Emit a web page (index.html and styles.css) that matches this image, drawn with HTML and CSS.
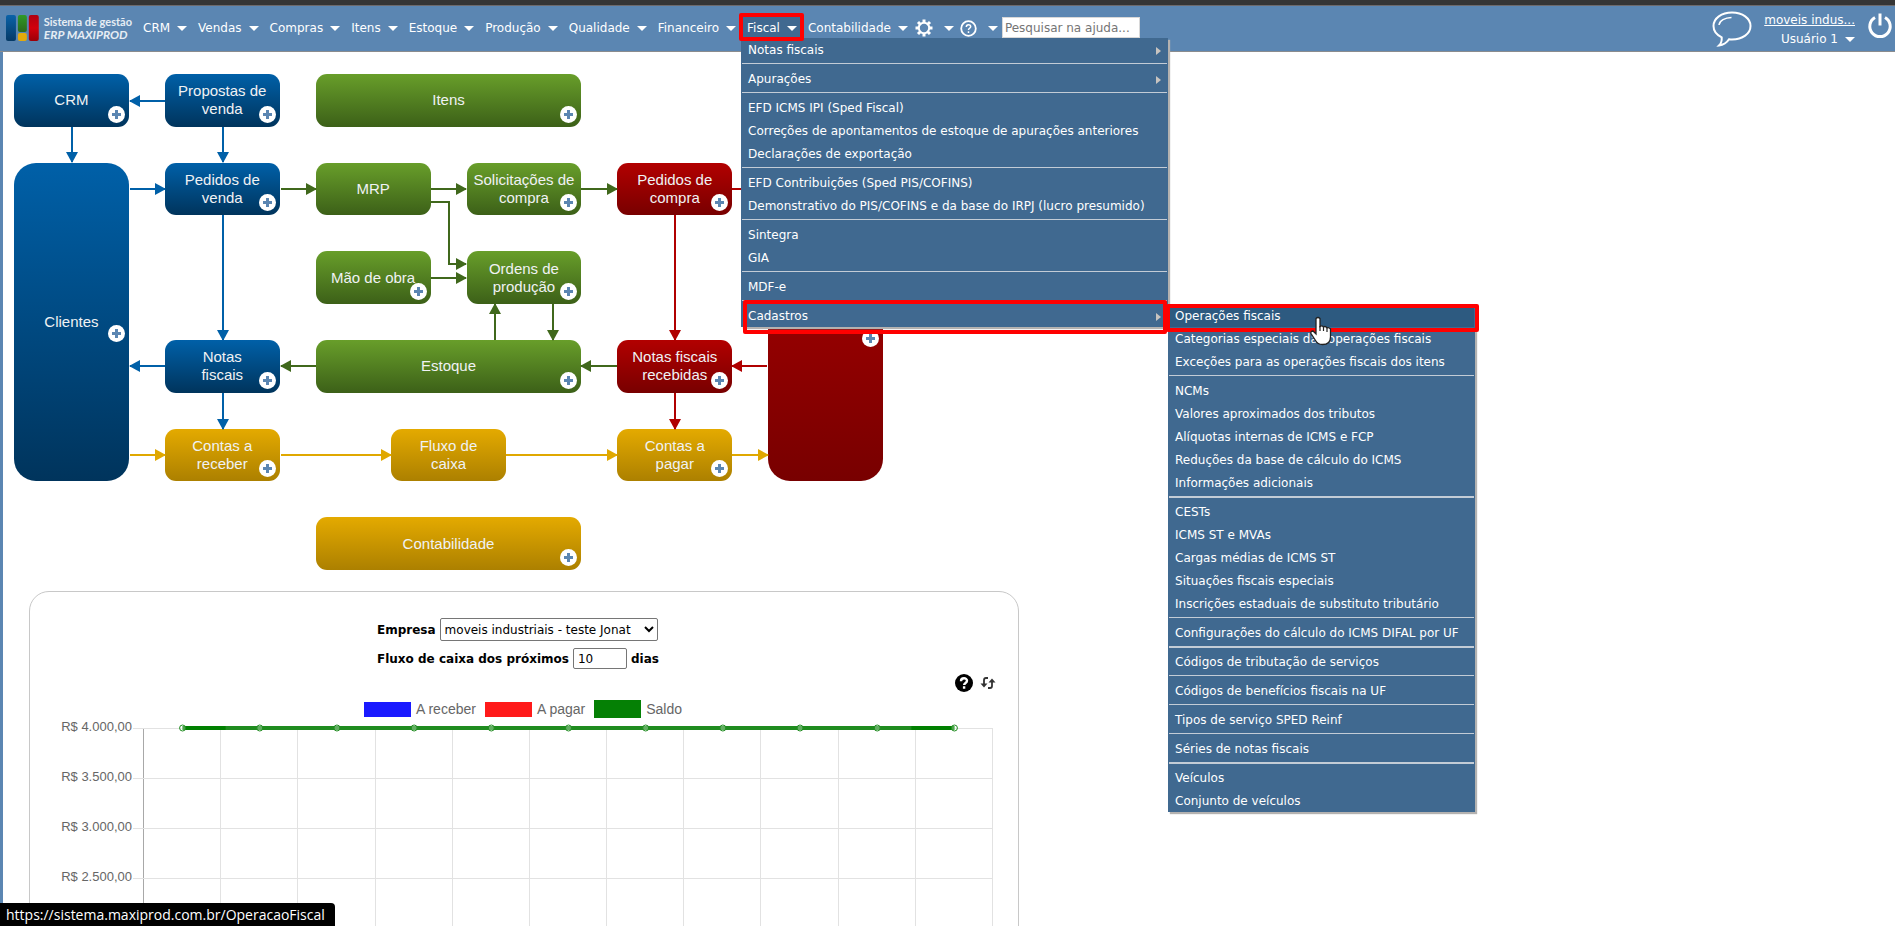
FILE: index.html
```html
<!DOCTYPE html>
<html lang="pt-BR">
<head>
    <meta charset="UTF-8">
    <meta name="viewport" content="width=device-width, initial-scale=1.0">
    <title>ERP MAXIPROD</title>
    <link rel="stylesheet" href="styles.css">
</head>
<body>
    <div class="top-strip"></div>
    <header class="header">
        <a class="logo" href="#">
            <svg width="34" height="26" viewBox="0 0 34 26">
                <defs>
                    <linearGradient id="logoBlue" x1="0" y1="0" x2="0" y2="1"><stop offset="0" stop-color="#0a62a8"/><stop offset="1" stop-color="#063a66"/></linearGradient>
                    <linearGradient id="logoGreen" x1="0" y1="0" x2="0" y2="1"><stop offset="0" stop-color="#2f9a26"/><stop offset="1" stop-color="#2c6a1c"/></linearGradient>
                    <linearGradient id="logoRed" x1="0" y1="0" x2="0" y2="1"><stop offset="0" stop-color="#b00010"/><stop offset="0.5" stop-color="#d2000c"/><stop offset="1" stop-color="#9c0008"/></linearGradient>
                </defs>
                <rect x="0" y="0" width="10" height="26" rx="2" fill="url(#logoBlue)"/>
                <rect x="12" y="0" width="9" height="17" rx="2" fill="url(#logoGreen)"/>
                <rect x="12" y="18" width="9" height="8" rx="2" fill="#e3aa0c"/>
                <rect x="23" y="0" width="10" height="26" rx="2" fill="url(#logoRed)"/>
            </svg>
            <span class="logo-text">Sistema de gestão<br><em>ERP MAXIPROD</em></span>
        </a>

        <nav>
            <ul class="nav">
                <li><a class="tab" href="#">CRM</a></li>
                <li><a class="tab" href="#">Vendas</a></li>
                <li><a class="tab" href="#">Compras</a></li>
                <li><a class="tab" href="#">Itens</a></li>
                <li><a class="tab" href="#">Estoque</a></li>
                <li><a class="tab" href="#">Produção</a></li>
                <li><a class="tab" href="#">Qualidade</a></li>
                <li><a class="tab" href="#">Financeiro</a></li>
                <li class="open">
                    <a class="tab marked" href="#">Fiscal</a>
                    <ul class="menu">
                        <li><a class="has-sub" href="#">Notas fiscais</a></li>
                        <li class="sep"><a class="has-sub" href="#">Apurações</a></li>
                        <li class="sep"><a href="#">EFD ICMS IPI (Sped Fiscal)</a></li>
                        <li><a href="#">Correções de apontamentos de estoque de apurações anteriores</a></li>
                        <li><a href="#">Declarações de exportação</a></li>
                        <li class="sep"><a href="#">EFD Contribuições (Sped PIS/COFINS)</a></li>
                        <li><a href="#">Demonstrativo do PIS/COFINS e da base do IRPJ (lucro presumido)</a></li>
                        <li class="sep"><a href="#">Sintegra</a></li>
                        <li><a href="#">GIA</a></li>
                        <li class="sep"><a href="#">MDF-e</a></li>
                        <li class="sep">
                            <a class="has-sub marked" href="#">Cadastros</a>
                            <ul class="menu submenu">
                                <li><a class="active marked" href="#">Operações fiscais</a></li>
                                <li><a href="#">Categorias especiais das operações fiscais</a></li>
                                <li><a href="#">Exceções para as operações fiscais dos itens</a></li>
                                <li class="sep"><a href="#">NCMs</a></li>
                                <li><a href="#">Valores aproximados dos tributos</a></li>
                                <li><a href="#">Alíquotas internas de ICMS e FCP</a></li>
                                <li><a href="#">Reduções da base de cálculo do ICMS</a></li>
                                <li><a href="#">Informações adicionais</a></li>
                                <li class="sep thick"><a href="#">CESTs</a></li>
                                <li><a href="#">ICMS ST e MVAs</a></li>
                                <li><a href="#">Cargas médias de ICMS ST</a></li>
                                <li><a href="#">Situações fiscais especiais</a></li>
                                <li><a href="#">Inscrições estaduais de substituto tributário</a></li>
                                <li class="sep"><a href="#">Configurações do cálculo do ICMS DIFAL por UF</a></li>
                                <li class="sep thick"><a href="#">Códigos de tributação de serviços</a></li>
                                <li class="sep"><a href="#">Códigos de benefícios fiscais na UF</a></li>
                                <li class="sep"><a href="#">Tipos de serviço SPED Reinf</a></li>
                                <li class="sep"><a href="#">Séries de notas fiscais</a></li>
                                <li class="sep thick"><a href="#">Veículos</a></li>
                                <li><a href="#">Conjunto de veículos</a></li>
                            </ul>
                        </li>
                    </ul>
                </li>
                <li><a class="tab" href="#">Contabilidade</a></li>
                <li>
                    <a class="tab icon-tab" href="#" aria-label="Configurações">
                        <svg width="18" height="18" viewBox="0 0 18 18" fill="none" stroke="#fff">
                            <circle cx="9" cy="9" r="5.2" stroke-width="2"/>
                            <path stroke-width="3" d="M9 0.5v3M9 14.500v3M0.500 9h3M14.500 9h3M3 3l2 2M13 13l2 2M15 3l-2 2M5 13l-2 2"/>
                        </svg>
                    </a>
                </li>
                <li>
                    <a class="tab icon-tab" href="#" aria-label="Ajuda">
                        <svg width="17" height="17" viewBox="0 0 17 17" fill="none" stroke="#fff">
                            <circle cx="8.500" cy="8.500" r="7.300" stroke-width="1.800"/>
                            <path stroke-width="1.500" d="M6.300 6.900c0-3 4.400-2.900 4.400-.3 0 1.700-2.200 1.600-2.200 3.400M8.500 11.300v1.700"/>
                        </svg>
                    </a>
                </li>
            </ul>
        </nav>
        <input class="search" type="text" placeholder="Pesquisar na ajuda..." aria-label="Pesquisar na ajuda">

        <div class="user-area">
            <a href="#" aria-label="Chat">
                <svg width="40" height="36" viewBox="0 0 40 36" fill="none" stroke="#fff" stroke-width="2">
                    <path d="M20 1.500c10.500 0 18.500 5.800 18.500 13.500S30.500 28.500 20 28.500c-1 0-2-.1-3-.2-2 3.200-5.500 5.700-10 6.200 2-2 3-4.600 2.700-8.200C4.700 23.900 1.500 19.900 1.500 15 1.500 7.300 9.500 1.500 20 1.500z"/>
                    <path stroke-width="1.500" d="M7 14c.5-4.500 6-7.300 12.500-7.500"/>
                </svg>
            </a>
            <div class="user">
                <a class="company" href="#">moveis indus...</a>
                <a class="username" href="#">Usuário 1</a>
            </div>
            <a href="#" aria-label="Sair">
                <svg width="26" height="26" viewBox="0 0 26 26" fill="none" stroke="#fff" stroke-width="3">
                    <path d="M8 4.500a10.200 10.200 0 1 0 10 0"/>
                    <path d="M13 0.500v12"/>
                </svg>
            </a>
        </div>
    </header>

    <main class="content">
        <div class="flow">
            <svg class="arrows" width="869" height="496" viewBox="14 74 869 496" fill="none" stroke-width="2">
                <defs>
                    <marker id="headBlue" markerUnits="userSpaceOnUse" markerWidth="11" markerHeight="12" refX="10" refY="6" orient="auto"><path fill="#0060a8" d="M0 0l11 6-11 6z"/></marker>
                    <marker id="headGreen" markerUnits="userSpaceOnUse" markerWidth="11" markerHeight="12" refX="10" refY="6" orient="auto"><path fill="#40681c" d="M0 0l11 6-11 6z"/></marker>
                    <marker id="headRed" markerUnits="userSpaceOnUse" markerWidth="11" markerHeight="12" refX="10" refY="6" orient="auto"><path fill="#b00000" d="M0 0l11 6-11 6z"/></marker>
                    <marker id="headYellow" markerUnits="userSpaceOnUse" markerWidth="11" markerHeight="12" refX="10" refY="6" orient="auto"><path fill="#e0a800" d="M0 0l11 6-11 6z"/></marker>
                </defs>
                <g class="blue-arrows">
                    <path d="M165 101H130"/>
                    <path d="M72 127V162"/>
                    <path d="M223 127V162"/>
                    <path d="M130 189H165"/>
                    <path d="M223 215V340"/>
                    <path d="M165 366H130"/>
                    <path d="M223 393V429"/>
                </g>
                <g class="green-arrows">
                    <path d="M281 189H316"/>
                    <path d="M431 189H466"/>
                    <path d="M431 202H449V264H466"/>
                    <path d="M431 278H466"/>
                    <path d="M581 189H617"/>
                    <path d="M495 340V304"/>
                    <path d="M553 304V340"/>
                    <path d="M316 366H281"/>
                    <path d="M617 366H581"/>
                </g>
                <g class="red-arrows">
                    <path d="M732 189H767"/>
                    <path d="M675 215V340"/>
                    <path d="M767 366H732"/>
                    <path d="M675 393V429"/>
                </g>
                <g class="yellow-arrows">
                    <path d="M130 455H165"/>
                    <path d="M281 455H391"/>
                    <path d="M506 455H617"/>
                    <path d="M732 455H768"/>
                </g>
            </svg>
            <a class="node blue col1 row1" href="#">CRM<i class="plus"></i></a>
            <a class="node blue col2 row1" href="#">Propostas de venda<i class="plus"></i></a>
            <a class="node green wide row1" href="#">Itens<i class="plus"></i></a>
            <a class="node blue tall col1" href="#">Clientes<i class="plus"></i></a>
            <a class="node blue col2 row2" href="#">Pedidos de venda<i class="plus"></i></a>
            <a class="node green col3 row2" href="#">MRP</a>
            <a class="node green col4 row2" href="#">Solicitações de compra<i class="plus"></i></a>
            <a class="node red col5 row2" href="#">Pedidos de compra<i class="plus"></i></a>
            <a class="node red tall col6" href="#" aria-label="Fornecedores"><i class="plus"></i></a>
            <a class="node green col3 row3" href="#">Mão de obra<i class="plus"></i></a>
            <a class="node green col4 row3" href="#">Ordens de produção<i class="plus"></i></a>
            <a class="node blue col2 row4" href="#">Notas<br>fiscais<i class="plus"></i></a>
            <a class="node green wide row4" href="#">Estoque<i class="plus"></i></a>
            <a class="node red col5 row4" href="#">Notas fiscais recebidas<i class="plus"></i></a>
            <a class="node yellow col2 row5" href="#">Contas a receber<i class="plus"></i></a>
            <a class="node yellow centered row5" href="#">Fluxo de<br>caixa</a>
            <a class="node yellow col5 row5" href="#">Contas a<br>pagar<i class="plus"></i></a>
            <a class="node yellow wide row6" href="#">Contabilidade<i class="plus"></i></a>
        </div>

        <section class="panel">
            <form class="filters">
                <div class="filter-row">
                    <label for="empresa">Empresa</label>
                    <select id="empresa">
                        <option>moveis industriais - teste Jonat</option>
                    </select>
                </div>
                <div class="filter-row">
                    <label for="dias">Fluxo de caixa dos próximos</label>
                    <input id="dias" type="text" value="10">
                    <span>dias</span>
                </div>
            </form>
            <div class="tools">
                <button type="button" aria-label="Ajuda">
                    <svg width="18" height="18" viewBox="0 0 18 18">
                        <circle cx="9" cy="9" r="9"/>
                        <path fill="none" stroke="#fff" stroke-width="2.400" d="M6 7.200c0-3.900 6-3.800 6-.4 0 2.200-2.900 2-2.900 4.300M9.100 12.300v2.400"/>
                    </svg>
                </button>
                <button type="button" aria-label="Atualizar">
                    <svg width="16" height="14" viewBox="0 0 16 14" fill="#333">
                        <path fill="none" stroke="#333" stroke-width="1.800" d="M8 2H6Q4 2 4 4v5M8 12h2q2 0 2-2V5"/>
                        <path d="M0.500 7.500h7L4 11.500zM8.500 6.500h7L12 2.500z"/>
                    </svg>
                </button>
            </div>
            <div class="legend">
                <span><i class="swatch receber"></i>A receber</span>
                <span><i class="swatch pagar"></i>A pagar</span>
                <span><i class="swatch saldo"></i>Saldo</span>
            </div>
            <div class="chart">
                <div class="y-axis">
                    <span>R$ 4.000,00</span>
                    <span>R$ 3.500,00</span>
                    <span>R$ 3.000,00</span>
                    <span>R$ 2.500,00</span>
                </div>
                <svg id="plot" width="860" height="260" viewBox="0 0 860 260"></svg>
            </div>
        </section>
    </main>

    <div class="status">https://sistema.maxiprod.com.br/OperacaoFiscal</div>

    <svg class="cursor" width="22" height="30" viewBox="0 0 22 30">
        <path fill="#fff" stroke="#222" stroke-width="1.300" d="M6 2.500q2-2 4 0v8q2-1.500 3.500.5 2-1.200 3.500.8 2-.8 3.500 1.200v8q0 7.500-8 7.500-5 0-7-4l-4.500-7q-.5-2.500 2-2.500l3 3z"/>
        <path fill="none" stroke="#222" stroke-width="1.200" d="M10 10v5M13.500 11v4M17 12v4"/>
    </svg>

    <script>
        const plot = document.getElementById("plot");
        const left = 11;
        const top0 = 10;
        const stepX = 849 / 11;
        const stepY = 50;
        let shapes = "";

        // Grid lines
        for (let i = 0; i <= 11; i++) {
            const x = Math.round(left + i * stepX);
            shapes += `<rect class="${i === 0 ? "axis" : "grid"}" x="${x - 1}" y="${top0}" width="1" height="250"/>`;
        }
        for (let i = 0; i < 5; i++) {
            shapes += `<rect class="grid" x="0" y="${top0 + i * stepY}" width="860" height="1"/>`;
        }

        // Saldo
        const saldo = [4000, 4000, 4000, 4000, 4000, 4000, 4000, 4000, 4000, 4000, 4000];
        const points = saldo.map((v, i) => [left + (i + 0.5) * stepX, top0 + (4000 - v) / 500 * stepY]);
        shapes += `<polyline class="line" points="${points.join(" ")}"/>`;
        shapes += `<path class="line strong" d="M${points[0]}h43M${points[10]}h-43"/>`;
        points.forEach(p => {
            shapes += `<circle class="point" cx="${p[0]}" cy="${p[1]}" r="3"/>`;
        });
        plot.innerHTML = shapes;
    </script>
</body>
</html>
```
FILE: styles.css
```css
body {
    margin: 0;
    height: 100vh;
    overflow: hidden;
    display: flex;
    flex-direction: column;
    background: #fff;
    font-family: "DejaVu Sans", Verdana, sans-serif;
    font-size: 12px;
    color: #000;
}

a {
    color: inherit;
    text-decoration: none;
}

ul {
    list-style: none;
    margin: 0;
    padding: 0;
}

.top-strip {
    height: 5px;
    flex: none;
    background: #353535;
    border-bottom: 1px solid #6d6a6c;
}

.header {
    height: 45px;
    flex: none;
    display: flex;
    align-items: flex-start;
    background: #5b86b2;
    border-bottom: 1px solid #8a8c8e;
    color: #fff;
}

.logo {
    display: flex;
    gap: 4px;
    width: 132px;
    padding: 9px 0 0 6px;
    box-sizing: border-box;
}

.logo-text {
    font-family: Lato, sans-serif;
    font-size: 11px;
    font-weight: bold;
    line-height: 13px;
    white-space: nowrap;
    color: #e6edf4;
}

.logo-text em {
    font-size: 12px;
}

/* Main navigation */
.nav {
    display: flex;
    padding: 8px 0 0 5px;
}

.nav > li {
    position: relative;
}

.tab {
    position: relative;
    display: flex;
    align-items: center;
    gap: 7px;
    height: 28px;
    padding: 0 5px 0 6px;
}

.tab::after,
.username::after {
    content: "";
    border: 5px solid transparent;
    border-top-color: #fff;
    border-bottom: 0;
}

.icon-tab {
    gap: 11px;
    padding: 0 4px 0 2px;
}

.open .tab {
    background: #406990;
}

.menu {
    position: absolute;
    z-index: 2;
    top: 24px;
    left: 0;
    min-width: 427px;
    background: #406990;
    box-shadow: 2px 2px 1px #b4b2b0;
    white-space: nowrap;
}

.menu li {
    position: relative;
    padding: 0 1px;
}

.menu a {
    position: relative;
    display: block;
    height: 23px;
    line-height: 24px;
    padding: 0 10px 0 6px;
}

.menu .sep::before {
    content: "";
    display: block;
    height: 1px;
    margin: 2px 0 3px;
    background: #c3ccd6;
}

.menu .thick::before {
    height: 2px;
    margin-bottom: 2px;
}

.has-sub::after {
    content: "";
    position: absolute;
    right: 6px;
    top: 9px;
    border: 4px solid transparent;
    border-left: 5px solid #c8c4c0;
    border-right: 0;
}

.submenu {
    top: 4px;
    left: 100%;
    min-width: 307px;
}

.menu .active {
    background: #2d5a80;
}

/* Red frames round the path to the page */
.marked::before {
    content: "";
    position: absolute;
    z-index: 3;
    inset: -1px -2px 1px;
    border: 4px solid #f00;
    border-radius: 2px;
}

.menu .marked::before {
    inset: -4px 0 -7px 1px;
}

.submenu .marked::before {
    inset: 0 -5px -5px -3px;
}

.search {
    width: 138px;
    height: 21px;
    margin: 11px 0 0;
    padding: 0 2px;
    box-sizing: border-box;
    border: 1px solid #d8d8d8;
    font: inherit;
}

.search::placeholder {
    color: #757575;
}

.user-area {
    display: flex;
    gap: 12px;
    margin-left: auto;
    padding: 5px 2px 0 0;
}

.user {
    display: flex;
    flex-direction: column;
    align-items: flex-end;
    line-height: 19px;
}

.company {
    text-decoration: underline;
}

.username {
    display: flex;
    align-items: center;
    gap: 7px;
}

.user-area > a:last-child {
    padding-top: 2px;
}

.content {
    flex: 1;
    min-height: 0;
    overflow: hidden;
    border-left: 3px solid #5b86b2;
    padding: 22px 0 0 11px;
}

/* Process diagram */
.flow {
    position: relative;
    display: grid;
    grid-template-columns: repeat(6, 1fr);
    grid-template-rows: repeat(6, 1fr);
    gap: 36px;
    width: 869px;
    height: 496px;
}

.arrows {
    position: absolute;
    z-index: 1;
    pointer-events: none;
}

.blue-arrows { stroke: #0060a8; }
.green-arrows { stroke: #40681c; }
.red-arrows { stroke: #b00000; }
.yellow-arrows { stroke: #e0a800; }
.blue-arrows path { marker-end: url(#headBlue); }
.green-arrows path { marker-end: url(#headGreen); }
.red-arrows path { marker-end: url(#headRed); }
.yellow-arrows path { marker-end: url(#headYellow); }

.node {
    position: relative;
    display: flex;
    align-items: center;
    justify-content: center;
    padding: 0 6px;
    border-radius: 11px;
    font-family: "Liberation Sans", Arial, sans-serif;
    font-size: 15px;
    line-height: 18px;
    text-align: center;
    color: #f0f2f4;
}

.blue { background: linear-gradient(#0060a8, #00345c); }
.green { background: linear-gradient(#689e2a, #3c6018); }
.red { background: linear-gradient(#b20000, #780000); }
.yellow { background: linear-gradient(#e4aa00, #ac8000); }

.col1 { grid-column: 1; }
.col2 { grid-column: 2; }
.col3 { grid-column: 3; }
.col4 { grid-column: 4; }
.col5 { grid-column: 5; }
.col6 { grid-column: 6; }
.row1 { grid-row: 1; }
.row2 { grid-row: 2; }
.row3 { grid-row: 3; }
.row4 { grid-row: 4; }
.row5 { grid-row: 5; }
.row6 { grid-row: 6; }

.wide {
    grid-column: 3 / 5;
}

.tall {
    grid-row: 2 / 6;
    border-radius: 22px;
}

.centered {
    grid-column: 3 / 5;
    justify-self: center;
    width: 103px;
}

.plus {
    position: absolute;
    right: 4px;
    bottom: 4px;
    width: 17px;
    height: 17px;
    border-radius: 50%;
    background:
        linear-gradient(#5b86b2, #5b86b2) center / 9px 3px no-repeat,
        linear-gradient(#5b86b2, #5b86b2) center / 3px 9px no-repeat,
        #fff;
}

.tall .plus {
    bottom: 139px;
}

.red.tall .plus {
    bottom: 134px;
}

/* Cash flow panel */
.panel {
    max-width: 988px;
    height: 400px;
    margin: 21px 0 0 15px;
    border: 1px solid #c8c8c8;
    border-radius: 20px;
    box-sizing: content-box;
}

.filters {
    display: flex;
    flex-direction: column;
    gap: 7px;
    padding: 26px 0 0 347px;
}

.filter-row {
    display: flex;
    align-items: center;
    gap: 4px;
    font-weight: bold;
}

.filter-row select,
.filter-row input {
    box-sizing: border-box;
    border: 1px solid #767676;
    border-radius: 2px;
    background: #fff;
    color: #000;
    font-family: inherit;
    font-size: 12px;
}

.filter-row select {
    height: 23px;
    width: 218px;
    padding: 0;
}

.filter-row input {
    height: 21px;
    width: 54px;
    padding: 0 4px;
}

.tools {
    display: flex;
    justify-content: flex-end;
    align-items: center;
    gap: 7px;
    padding: 5px 22px 0 0;
}

.tools button {
    display: flex;
    padding: 0;
    border: 0;
    background: none;
}

.legend {
    display: flex;
    gap: 9px;
    margin: 8px 0 0 334px;
    font: 14px/18px "Liberation Sans", Arial, sans-serif;
    color: #666;
}

.legend span {
    display: flex;
    align-items: center;
    gap: 5px;
}

.swatch {
    width: 47px;
    height: 15px;
}

.receber { background: #1a1aff; }
.pagar { background: #ff1a1a; }
.saldo { background: #058005; height: 18px; }

.chart {
    display: flex;
    gap: 1px;
}

.y-axis {
    display: flex;
    flex-direction: column;
    width: 102px;
    margin-top: -16px;
    text-align: right;
    font: 13px/50px "Liberation Sans", Arial, sans-serif;
    color: #666;
}

.grid { fill: #e2e2e2; }
.axis { fill: #a8a8a8; }

.line {
    fill: none;
    stroke: #1f8c1f;
    stroke-width: 4;
}

.strong {
    stroke: #008000;
}

.point {
    fill: rgba(255, 255, 255, 0.3);
    stroke: #1f8c1f;
    stroke-width: 1;
}

.status {
    position: fixed;
    z-index: 4;
    left: 0;
    bottom: 0;
    padding: 0 10px 0 6px;
    border-radius: 0 4px 0 0;
    background: #000;
    color: #fff;
    font: 14px/23px "Open Sans", "Noto Sans", sans-serif;
}

.cursor {
    position: fixed;
    z-index: 5;
    left: 1310px;
    top: 316px;
}
```
